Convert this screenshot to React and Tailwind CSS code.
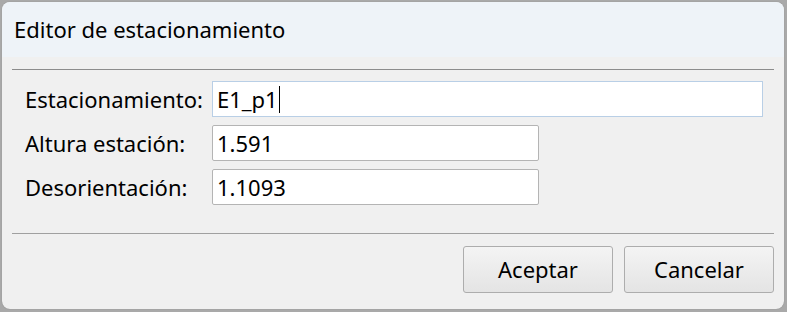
export default function App() {
  return (
    <div className="w-[787px] h-[312px] bg-[#a9a9a9] pt-[2px] pl-[2px] pr-[3px] pb-[3px] font-['Noto_Sans',sans-serif] text-[#000]">
      <div className="w-full h-full rounded-[8px] bg-[#f0f0f0] overflow-hidden flex flex-col shadow-[0_0_1px_#777]">
        {/* Title bar */}
        <div className="h-[55px] bg-[#eef3f8] pl-[12px] flex items-center text-[22px]">
          Editor de estacionamiento
        </div>

        <div className="px-[10px] pt-[12px]">
          <div className="h-px bg-[#8c8c8c]" />
        </div>

        {/* Form */}
        <div className="pl-[23px] pt-[11px] flex flex-col gap-[8px]">
          <Row label="Estacionamiento:" value="E1_p1" wide focused />
          <Row label="Altura estación:" value="1.591" />
          <Row label="Desorientación:" value="1.1093" />
        </div>

        <div className="px-[10px] pt-[28px]">
          <div className="h-px bg-[#a0a0a0]" />
        </div>

        {/* Buttons */}
        <div className="flex justify-end gap-[11px] pr-[10px] pt-[12px]">
          <Button>Aceptar</Button>
          <Button>Cancelar</Button>
        </div>
      </div>
    </div>
  )
}

function Row({ label, value, wide, focused }) {
  return (
    <div className="flex items-center">
      <span className="w-[187px] shrink-0 text-[22px] leading-none">{label}</span>
      <div
        className={`h-[36px] flex items-center pl-[4px] bg-white border text-[22px] ${
          wide ? 'w-[551px]' : 'w-[327px] rounded-[2px]'
        } ${focused ? 'border-[#b9cfe6]' : 'border-[#b4b4b4]'}`}
      >
        <span>{value}</span>
        {focused && <span className="w-px h-[27px] bg-black ml-[1px]" />}
      </div>
    </div>
  )
}

function Button({ children }) {
  return (
    <button className="w-[150px] h-[47px] rounded-[3px] border border-[#adadad] bg-gradient-to-b from-[#f4f4f4] to-[#e4e4e4] text-[22px] text-black">
      {children}
    </button>
  )
}
